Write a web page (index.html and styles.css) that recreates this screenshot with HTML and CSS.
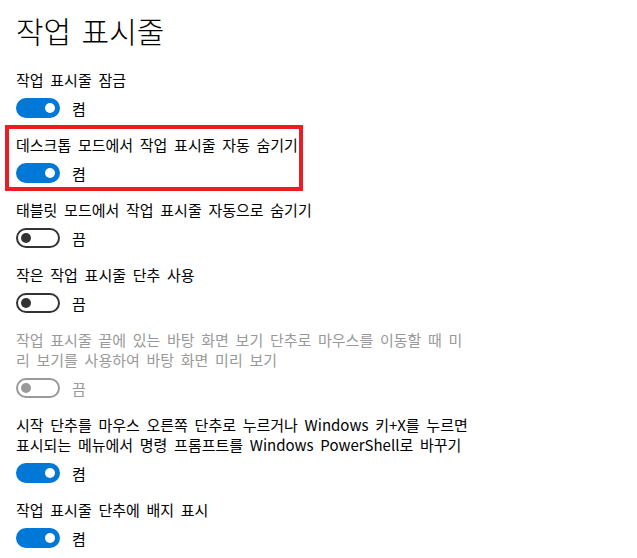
FILE: index.html
```html
<!DOCTYPE html>
<html lang="ko">
<head>
    <meta charset="UTF-8">
    <meta name="viewport" content="width=device-width, initial-scale=1.0">
    <title>작업 표시줄</title>
    <link rel="stylesheet" href="styles.css">
</head>
<body>
    <div class="page">
        <h1>작업 표시줄</h1>

        <div class="setting">
            <div class="label">작업 표시줄 잠금</div>
            <div class="switch-row">
                <span class="toggle on"><span class="knob"></span></span>
                <span class="state">켬</span>
            </div>
        </div>

        <div class="setting highlight">
            <div class="label">데스크톱 모드에서 작업 표시줄 자동 숨기기</div>
            <div class="switch-row">
                <span class="toggle on"><span class="knob"></span></span>
                <span class="state">켬</span>
            </div>
        </div>

        <div class="setting">
            <div class="label">태블릿 모드에서 작업 표시줄 자동으로 숨기기</div>
            <div class="switch-row">
                <span class="toggle"><span class="knob"></span></span>
                <span class="state">끔</span>
            </div>
        </div>

        <div class="setting">
            <div class="label">작은 작업 표시줄 단추 사용</div>
            <div class="switch-row">
                <span class="toggle"><span class="knob"></span></span>
                <span class="state">끔</span>
            </div>
        </div>

        <div class="setting disabled">
            <div class="label">작업 표시줄 끝에 있는 바탕 화면 보기 단추로 마우스를 이동할 때 미<br>리 보기를 사용하여 바탕 화면 미리 보기</div>
            <div class="switch-row">
                <span class="toggle"><span class="knob"></span></span>
                <span class="state">끔</span>
            </div>
        </div>

        <div class="setting">
            <div class="label">시작 단추를 마우스 오른쪽 단추로 누르거나 Windows 키+X를 누르면<br>표시되는 메뉴에서 명령 프롬프트를 Windows PowerShell로 바꾸기</div>
            <div class="switch-row">
                <span class="toggle on"><span class="knob"></span></span>
                <span class="state">켬</span>
            </div>
        </div>

        <div class="setting">
            <div class="label">작업 표시줄 단추에 배지 표시</div>
            <div class="switch-row">
                <span class="toggle on"><span class="knob"></span></span>
                <span class="state">켬</span>
            </div>
        </div>
    </div>
</body>
</html>
```

FILE: styles.css
```css
body {
    font-family: "Noto Sans CJK KR", "Noto Sans", sans-serif;
    margin: 0;
    padding: 0;
    background-color: #fff;
    color: #000;
}
.page {
    padding: 10px 16px 0;
}
h1 {
    font-size: 30px;
    font-weight: 300;
    line-height: 40px;
    margin: 0 0 20px;
    word-spacing: 2px;
}
.setting {
    position: relative;
    margin-bottom: 17px;
}
.setting.highlight::after {
    content: "";
    position: absolute;
    top: -10px;
    bottom: -8px;
    left: -11px;
    width: 298px;
    box-sizing: border-box;
    border: 4px solid #ed1c24;
}
.label {
    font-size: 15px;
    line-height: 20px;
    word-spacing: 2.5px;
    max-width: 520px;
}
.switch-row {
    display: flex;
    align-items: center;
    margin-top: 8px;
    height: 20px;
}
.toggle {
    display: flex;
    align-items: center;
    box-sizing: border-box;
    width: 44px;
    height: 20px;
    padding: 0 3px;
    border: 2px solid #333;
    border-radius: 10px;
}
.knob {
    width: 10px;
    height: 10px;
    border-radius: 50%;
    background-color: #333;
}
.toggle.on {
    justify-content: flex-end;
    background-color: #0078d7;
    border-color: #0078d7;
}
.toggle.on .knob {
    background-color: #fff;
}
.state {
    font-size: 15px;
    margin-left: 12px;
}
.disabled .label,
.disabled .state {
    color: #999;
}
.disabled .toggle {
    border-color: #999;
}
.disabled .knob {
    background-color: #999;
}
```
